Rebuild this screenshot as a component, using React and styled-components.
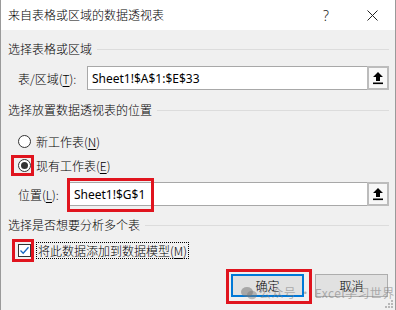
import React from "react";
import styled, { createGlobalStyle } from "styled-components";

const GlobalStyle = createGlobalStyle`
  html, body {
    margin: 0;
    padding: 0;
    background: #f0f0f0;
  }
  body {
    font-family: "Noto Sans CJK SC", "Noto Sans", sans-serif;
    font-size: 12px;
    font-weight: 300;
    color: #000;
  }
`;

const Window = styled.div`
  position: relative;
  width: 396px;
  height: 310px;
  box-sizing: border-box;
  border-left: 1px solid #9a9a9a;
  border-right: 1px solid #9a9a9a;
  background: #f0f0f0;
  overflow: hidden;
  display: flex;
  flex-direction: column;
`;

const TitleBar = styled.div`
  height: 30px;
  flex: none;
  background: #fff;
  display: flex;
  align-items: center;
  padding: 0 0 0 7px;
  font-size: 12px;
`;

const TitleText = styled.div`
  flex: 1;
  line-height: 16px;
`;

const TitleButton = styled.div`
  width: 46px;
  height: 30px;
  display: flex;
  align-items: center;
  justify-content: center;
  font-family: "Noto Sans", sans-serif;
  font-size: 14px;
  color: #222;
`;

const Body = styled.div`
  flex: 1;
  padding: 11px 6px 0 7px;
  display: flex;
  flex-direction: column;
`;

const Heading = styled.div`
  display: flex;
  align-items: center;
  height: 16px;
  line-height: 16px;
  margin-top: ${(p) => p.$top || 0}px;
  white-space: nowrap;
`;

const Rule = styled.div`
  flex: 1;
  height: 1px;
  background: #dcdcdc;
  margin: 0 0 0 5px;
`;

const FieldRow = styled.div`
  display: flex;
  align-items: center;
  height: 24px;
  margin-top: ${(p) => p.$top || 0}px;
  padding-left: 10px;
`;

const Label = styled.div`
  width: ${(p) => p.$w}px;
  flex: none;
  white-space: nowrap;
`;

const Key = styled.span`
  text-decoration: underline;
  text-underline-offset: 2px;
`;

const InputWrap = styled.div`
  position: relative;
  flex: 1;
  height: 24px;
  display: flex;
`;

const Input = styled.div`
  flex: 1;
  box-sizing: border-box;
  height: 24px;
  background: #fff;
  border: 1px solid #a8a8a8;
  border-right: none;
  display: flex;
  align-items: center;
  padding-left: 4px;
  font-family: "Noto Sans", "Noto Sans CJK SC", sans-serif;
  font-size: 12px;
  font-weight: 400;
`;

const PickButton = styled.div`
  width: 22px;
  height: 24px;
  box-sizing: border-box;
  border: 2px solid #bcbcbc;
  background: #f7f7f7;
  display: flex;
  align-items: center;
  justify-content: center;
`;

const Highlight = styled.div`
  position: absolute;
  box-sizing: border-box;
  border: 3px solid #e0141e;
  left: ${(p) => p.$l}px;
  top: ${(p) => p.$t}px;
  width: ${(p) => p.$w}px;
  height: ${(p) => p.$h}px;
  pointer-events: none;
`;

const OptionRow = styled.div`
  position: relative;
  display: flex;
  align-items: center;
  height: 20px;
  margin-top: ${(p) => p.$top || 0}px;
  padding-left: 10px;
`;

const Radio = styled.div`
  width: 13px;
  height: 13px;
  box-sizing: border-box;
  border: 1px solid #333;
  border-radius: 50%;
  background: #fff;
  display: flex;
  align-items: center;
  justify-content: center;
  margin-right: 5px;
  &::after {
    content: "";
    display: ${(p) => (p.$on ? "block" : "none")};
    width: 7px;
    height: 7px;
    border-radius: 50%;
    background: #333;
  }
`;

const Checkbox = styled.div`
  width: 13px;
  height: 13px;
  box-sizing: border-box;
  border: 1px solid #333;
  background: #fff;
  display: flex;
  align-items: center;
  justify-content: center;
  margin-right: 5px;
`;

const FocusText = styled.div`
  border: 1px dotted #000;
  padding: 0 1px;
  line-height: 15px;
`;

const ButtonRow = styled.div`
  display: flex;
  justify-content: flex-end;
  gap: 11px;
  margin-top: 14px;
  padding-right: 1px;
`;

const Button = styled.div`
  position: relative;
  width: 73px;
  height: 23px;
  box-sizing: border-box;
  background: #e1e1e1;
  border: ${(p) => (p.$primary ? "2px solid #0078d7" : "1px solid #adadad")};
  display: flex;
  align-items: center;
  justify-content: center;
`;

const Watermark = styled.div`
  position: absolute;
  left: 240px;
  top: 284px;
  display: flex;
  align-items: center;
  gap: 2px;
  color: rgba(120, 120, 120, 0.55);
  font-size: 12px;
  font-weight: 400;
  white-space: nowrap;
  letter-spacing: 0.4px;
  pointer-events: none;
`;

const Grip = styled.svg`
  position: absolute;
  right: 2px;
  bottom: 2px;
`;

const UpArrow = () => (
  <svg width="12" height="14" viewBox="0 0 12 14">
    <path d="M6 1 L11 6 L8 6 L8 10 L4 10 L4 6 L1 6 Z" fill="#000" />
    <rect x="1" y="11.5" width="10" height="1.6" fill="#000" />
  </svg>
);

const Field = ({ label, keyChar, labelWidth, value, top, highlight }) => (
  <FieldRow $top={top}>
    <Label $w={labelWidth}>
      {label}(<Key>{keyChar}</Key>):
    </Label>
    <InputWrap>
      <Input>{value}</Input>
      <PickButton>
        <UpArrow />
      </PickButton>
      {highlight && <Highlight $l={-2} $t={-4} $w={87} $h={34} />}
    </InputWrap>
  </FieldRow>
);

export default function App() {
  return (
    <>
      <GlobalStyle />
      <Window>
        <TitleBar>
          <TitleText>来自表格或区域的数据透视表</TitleText>
          <TitleButton>?</TitleButton>
          <TitleButton>
            <svg width="11" height="11" viewBox="0 0 11 11">
              <path d="M0.5 0.5 L10.5 10.5 M10.5 0.5 L0.5 10.5" stroke="#222" strokeWidth="1" />
            </svg>
          </TitleButton>
        </TitleBar>
        <Body>
          <Heading>
            选择表格或区域
            <Rule />
          </Heading>
          <Field
            top={9}
            label="表/区域"
            keyChar="T"
            labelWidth={69}
            value="Sheet1!$A$1:$E$33"
          />
          <Heading $top={12}>
            选择放置数据透视表的位置
            <Rule />
          </Heading>
          <OptionRow $top={13}>
            <Radio />
            新工作表(<Key>N</Key>)
          </OptionRow>
          <OptionRow $top={4}>
            <Radio $on />
            现有工作表(<Key>E</Key>)
            <Highlight $l={3} $t={-0} $w={23} $h={21} />
          </OptionRow>
          <Field
            top={7}
            label="位置"
            keyChar="L"
            labelWidth={51}
            value="Sheet1!$G$1"
            highlight
          />
          <Heading $top={11}>
            选择是否想要分析多个表
            <Rule />
          </Heading>
          <OptionRow $top={7}>
            <Checkbox>
              <svg width="11" height="11" viewBox="0 0 11 11">
                <path d="M1.5 5.5 L4.2 8.2 L9.5 2.2" fill="none" stroke="#1565c0" strokeWidth="1.3" />
              </svg>
            </Checkbox>
            <FocusText>
              将此数据添加到数据模型(<Key>M</Key>)
            </FocusText>
            <Highlight $l={4} $t={-1} $w={22} $h={23} />
          </OptionRow>
          <ButtonRow>
            <Button $primary>
              确定
              <Highlight $l={-7} $t={-7} $w={86} $h={35} />
            </Button>
            <Button>取消</Button>
          </ButtonRow>
        </Body>
        <Watermark>
          <svg width="16" height="14" viewBox="0 0 16 14">
            <ellipse cx="6" cy="6" rx="6" ry="5" fill="rgba(120,120,120,0.55)" />
            <ellipse cx="11" cy="9" rx="5" ry="4.2" fill="rgba(120,120,120,0.45)" />
          </svg>
          <span>公众号 · Excel学习世界</span>
        </Watermark>
        <Grip width="10" height="10" viewBox="0 0 10 10">
          <rect x="8" y="2" width="2" height="2" fill="#b8b8b8" />
          <rect x="5" y="5" width="2" height="2" fill="#b8b8b8" />
          <rect x="8" y="5" width="2" height="2" fill="#b8b8b8" />
          <rect x="2" y="8" width="2" height="2" fill="#b8b8b8" />
          <rect x="5" y="8" width="2" height="2" fill="#b8b8b8" />
          <rect x="8" y="8" width="2" height="2" fill="#b8b8b8" />
        </Grip>
      </Window>
    </>
  );
}
